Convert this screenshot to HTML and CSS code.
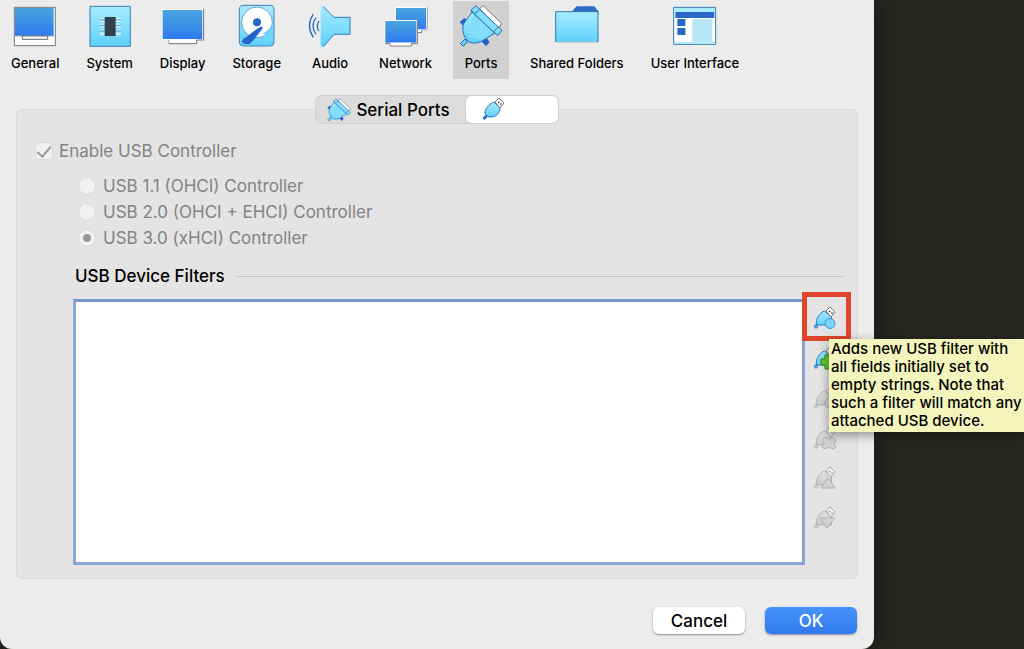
FILE: index.html
```html
<!DOCTYPE html>
<html lang="en">
<head>
<meta charset="utf-8">
<title>Settings - Ports</title>
<link rel="stylesheet" href="styles.css">
</head>
<body>
<svg class="defs" aria-hidden="true">
  <defs>
    <linearGradient id="screen" x1="0" y1="0" x2="0" y2="1"><stop offset="0" stop-color="#48a5dc"/><stop offset="1" stop-color="#2f7af0"/></linearGradient>
    <linearGradient id="aqua" x1="0" y1="0" x2="0" y2="1"><stop offset="0" stop-color="#a8ecfd"/><stop offset="1" stop-color="#5fd0fb"/></linearGradient>
    <linearGradient id="grey" x1="0" y1="0" x2="0" y2="1"><stop offset="0" stop-color="#e2e2e2"/><stop offset="1" stop-color="#cacaca"/></linearGradient>
    <symbol id="serial" viewBox="480 12 132 132">
      <path d="M542 26l10-9 55 52-4 12-10 4z" fill="#fff" stroke="#777" stroke-width="3"/>
      <path d="M482 66l14-12 14 12-14 15zM547 124l16-10 9 12-11 13z" fill="#2563cc"/>
      <path d="M484 131l14-14 7 8-12 14z" fill="#6bcdf8" stroke="#2469b4" stroke-width="3"/>
      <path d="M521 34l-28 38c-5 22 2 42 17 54 12 6 27 3 40-3l42-27z" fill="url(#aqua)" stroke="#2469b4" stroke-width="3"/>
      <path d="M516 31l14-14 79 74-12 15-14-10z" fill="#83def9" stroke="#2469b4" stroke-width="3"/>
      <path d="M524 38l60 57-34 25-40-10z" fill="#83def9"/>
      <path d="M515 32l69 65M527 41l15-13M583 96l15-15" stroke="#2469b4" stroke-width="3"/>
    </symbol>
    <symbol id="plug-head" viewBox="0 0 24 24">
      <path d="M13 4l4-4 5 5-4 5z" fill="#fff" stroke="#777"/>
      <path d="M16 4l1 1M18.500 5.500l1 1" stroke="#333" stroke-width="1.500"/>
    </symbol>
    <symbol id="plug" viewBox="0 0 24 24">
      <path d="M1.500 21l4-4" stroke="#2776bd" stroke-width="3"/>
      <path d="M12 4l6 6c0 5-4 9-9 9-3 0-5-1-6-4 0-4 4-9 9-11z" fill="url(#aqua)" stroke="#2776bd"/>
      <use href="#plug-head"/>
    </symbol>
    <symbol id="filter" viewBox="0 0 24 24">
      <path d="M3.500 18c-1-6 3-12 8-14l7 6v8z" fill="url(#aqua)" stroke="#2776bd"/>
      <circle cx="3" cy="19.500" r="1.600" fill="#69bff0" stroke="#2776bd"/>
      <use href="#plug-head"/>
    </symbol>
    <symbol id="filter-off" viewBox="0 0 24 24">
      <path d="M3.500 18c-1-6 3-12 8-14l7 6v8z" fill="url(#grey)" stroke="#b0b0b0"/>
      <circle cx="3" cy="19.500" r="1.600" fill="#ddd" stroke="#b0b0b0"/>
      <path d="M13 4l4-4 5 5-4 5z" fill="#f2f2f2" stroke="#aaa"/>
      <path d="M16 4l1 1M18.500 5.500l1 1" stroke="#999" stroke-width="1.500"/>
    </symbol>
  </defs>
</svg>

<main class="dialog">
  <nav class="toolbar" aria-label="Settings categories">
    <button class="category" type="button">
      <svg class="category-icon" viewBox="42 12 132 132"><path d="M46 22h123v115H46z" fill="#fff" stroke="#777" stroke-width="3"/><path d="M48 24h116v83H48z" fill="url(#screen)"/><path d="M48 108h118" stroke="#777" stroke-width="2"/><path d="M70 108h76v10H70z" fill="#fff" stroke="#666" stroke-width="3"/></svg>
      General
    </button>
    <button class="category" type="button">
      <svg class="category-icon" viewBox="271 12 132 132"><path d="M277 19h121v120H277z" fill="url(#aqua)" stroke="#3b7db8" stroke-width="3"/><path d="M306 56h64M306 64h64M306 73h64M306 81h64M306 90h64M306 99h64M306 104h64" stroke="#e8faff" stroke-width="3"/><path d="M306 59h64M306 76h64M306 93h64" stroke="#4b91bd" stroke-width="2"/><path d="M321 51h33v57h-33z" fill="#343f4d"/></svg>
      System
    </button>
    <button class="category" type="button">
      <svg class="category-icon" viewBox="499 12 132 132"><path d="M502 27h124v93H502z" fill="#fff"/><path d="M504 30h119v87H504z" fill="url(#screen)"/><path d="M627 27v93H606v11h-83v-10" fill="none" stroke="#777" stroke-width="3"/><path d="M524 119h80v10h-80z" fill="#fff"/></svg>
      Display
    </button>
    <button class="category" type="button">
      <svg class="category-icon" viewBox="729 12 132 132"><rect x="742" y="16" width="104" height="122" rx="12" fill="url(#aqua)" stroke="#3f83ba" stroke-width="3"/><circle cx="795" cy="67" r="46" fill="#fff" stroke="#397eb8" stroke-width="2"/><circle cx="795" cy="67" r="12" fill="#2465cb"/><path d="M811 79c-15 5-33 21-51 34-12 2-13 18-3 19h16c17-16 28-34 38-45z" fill="#2465cb"/><path d="M811 101c13-6 22-14 28-26v29z" fill="#72cef4"/></svg>
      Storage
    </button>
    <button class="category" type="button">
      <svg class="category-icon" viewBox="41 12 132 132"><path d="M79 16l8 4 32 32h49v51h-49l-32 37h-8z" fill="url(#aqua)"/><path d="M87 20l32 32h48v51h-48l-32 37" fill="none" stroke="#327ab9" stroke-width="3"/><path d="M74 63q-10 16 0 30M65 53q-18 25 0 50M57 42q-23 35 0 70" fill="none" stroke="#2870bf" stroke-width="4"/></svg>
      Audio
    </button>
    <button class="category" type="button">
      <svg class="category-icon" viewBox="262 12 132 132"><path d="M391 22v68h-16v8h-15" fill="#fff" stroke="#777" stroke-width="3"/><path d="M296 21h94v70h-94z" fill="#fff"/><path d="M298 24h90v64h-90z" fill="url(#screen)"/><path d="M264 60h98v70h-98z" fill="#fff"/><path d="M266 63h93v65h-93z" fill="url(#screen)"/><path d="M362 61v70h-17v7h-64v-7h-15" fill="none" stroke="#777" stroke-width="3"/><path d="M282 128h61v8h-61z" fill="#fff"/></svg>
      Network
    </button>
    <button class="category category-active" type="button" aria-current="page">
      <svg class="category-icon"><use href="#serial"/></svg>
      Ports
    </button>
    <button class="category" type="button">
      <svg class="category-icon" viewBox="128 12 132 132"><path d="M180 34l12-15h54l12 15v10h-78z" fill="#2c6dcc"/><path d="M130 35h127v90H130z" fill="url(#aqua)"/><path d="M130 126V35h127v91" fill="none" stroke="#3378b1" stroke-width="3"/><path d="M132 126h124" stroke="#8ab6cc" stroke-width="3"/></svg>
      Shared Folders
    </button>
    <button class="category" type="button">
      <svg class="category-icon" viewBox="497 12 132 132"><path d="M499 22h126v111H499z" fill="#fff" stroke="#3577b0" stroke-width="3"/><path d="M501 24h122v12H501z" fill="#a7edfc"/><path d="M504 36h117v18H504zM510 57h24v21h-24zM510 84h24v21h-24z" fill="#2868c9"/><path d="M555 57h60v69h-60z" fill="#b8e8f5"/><path d="M502 129h120" stroke="#9fe7fb" stroke-width="4"/></svg>
      User Interface
    </button>
  </nav>

  <div class="tabs" role="tablist">
    <button class="tab" type="button" role="tab" aria-selected="false"><svg class="icon"><use href="#serial"/></svg>Serial Ports</button>
    <button class="tab tab-active" type="button" role="tab" aria-selected="true" aria-label="USB"><svg class="icon"><use href="#plug"/></svg></button>
  </div>

  <section class="panel">
    <label class="option"><input class="check" type="checkbox" checked disabled>Enable USB Controller</label>
    <div class="versions">
      <label class="option"><input class="radio" type="radio" name="usb" disabled>USB 1.1 (OHCI) Controller</label>
      <label class="option"><input class="radio" type="radio" name="usb" disabled>USB 2.0 (OHCI + EHCI) Controller</label>
      <label class="option"><input class="radio" type="radio" name="usb" checked disabled>USB 3.0 (xHCI) Controller</label>
    </div>
    <h2 class="heading" id="filters">USB Device Filters</h2>
    <div class="filters">
      <ul class="filter-list" role="listbox" tabindex="0" aria-labelledby="filters"></ul>
      <div class="actions">
        <div class="action-wrap">
          <button class="action" type="button" aria-label="Add empty filter" aria-describedby="tip"><svg class="icon" viewBox="0 0 24 24"><use href="#filter"/><circle cx="17" cy="16.500" r="5" fill="#77d6fb" stroke="#3e96d2"/></svg></button>
          <span class="highlight"></span>
          <div class="tooltip" id="tip" role="tooltip">Adds new USB filter with all fields initially set to empty strings. Note that such a filter will match any attached USB device.</div>
        </div>
        <button class="action" type="button" aria-label="Add filter from device"><svg class="icon" viewBox="0 0 24 24"><use href="#filter"/><path d="M12 8h6v4h4v6h-4v4h-6v-4H8v-6h4z" fill="#63c830" stroke="#28851d"/></svg></button>
        <button class="action" type="button" aria-label="Edit filter" disabled><svg class="icon" viewBox="0 0 24 24"><use href="#filter-off"/><circle cx="17" cy="16" r="5" fill="#d5d5d5" stroke="#b0b0b0"/></svg></button>
        <button class="action" type="button" aria-label="Remove filter" disabled><svg class="icon" viewBox="0 0 24 24"><use href="#filter-off"/><path d="M12 10l4 2 4-2 3 3-2 4 2 3-3 2-4-2-4 2-3-2 2-4-2-3z" fill="#d2d2d2" stroke="#b0b0b0"/></svg></button>
        <button class="action" type="button" aria-label="Move filter up" disabled><svg class="icon" viewBox="0 0 24 24"><use href="#filter-off"/><path d="M15 11l7 10H8z" fill="#d2d2d2" stroke="#b0b0b0"/></svg></button>
        <button class="action" type="button" aria-label="Move filter down" disabled><svg class="icon" viewBox="0 0 24 24"><use href="#filter-off"/><path d="M7 11h15l-8 10z" fill="#d2d2d2" stroke="#b0b0b0"/></svg></button>
      </div>
    </div>
  </section>

  <footer class="footer">
    <button class="button" type="button">Cancel</button>
    <button class="button button-primary" type="button">OK</button>
  </footer>
</main>
</body>
</html>
```

FILE: styles.css
```css
* { box-sizing: border-box; }

body {
  margin: 0;
  padding-right: 150px;
  background: #272721;
  color: #000;
  font: 17px/20px Inter, "Liberation Sans", sans-serif;
}

button {
  margin: 0;
  padding: 0;
  border: 0;
  background: none;
  color: inherit;
  font: inherit;
}

.defs { position: absolute; width: 0; height: 0; }

.dialog {
  display: flex;
  flex-direction: column;
  min-height: 100vh;
  padding-top: 1px;
  border-radius: 0 0 12px 12px;
  background: #ececec;
  box-shadow: 0 0 24px rgba(0, 0, 0, 0.5);
}

.toolbar {
  display: flex;
  gap: 15px;
  padding-left: 5px;
}

.category {
  display: flex;
  flex-direction: column;
  align-items: center;
  gap: 5px;
  padding: 3px 6px 6px;
  font-size: 13px;
  font-weight: 500;
  white-space: nowrap;
}

.category-active { background: #d1d1d1; }
.category-icon { width: 44px; height: 44px; }
.icon { display: block; width: 24px; height: 24px; }

.tabs {
  z-index: 1;
  display: flex;
  align-self: center;
  margin-top: 16px;
  border-radius: 7px;
  background: #dcdcdc;
  box-shadow: inset 0 0 0 1px #d0d0d0;
}

.tab {
  display: flex;
  align-items: center;
  gap: 5px;
  height: 29px;
  padding: 0 15px 0 12px;
  font-weight: 500;
}

.tab-active {
  width: 94px;
  padding-left: 16px;
  border: 1px solid #cfcfcf;
  border-radius: 7px;
  background: #fff;
}

.panel {
  display: flex;
  flex: 1;
  flex-direction: column;
  margin: -15px 16px 0;
  padding: 29px 14px 13px 18px;
  border: 1px solid #dadada;
  border-radius: 6px;
  background: #e4e4e4;
}

.option {
  display: flex;
  align-items: center;
  gap: 6px;
  min-height: 24px;
  color: #838383;
}

.check,
.radio {
  display: grid;
  place-items: center;
  width: 18px;
  height: 18px;
  margin: 0;
  border: 1px solid #d9d9d9;
  border-radius: 4px;
  background: #f1f1f1;
  appearance: none;
}

.radio { border-radius: 50%; }

.check:checked::before {
  width: 6px;
  height: 12px;
  margin-bottom: 3px;
  border: solid #999;
  border-width: 0 2px 2px 0;
  content: "";
  transform: rotate(40deg);
}

.radio:checked::before {
  width: 8px;
  height: 8px;
  border-radius: 50%;
  background: #979797;
  content: "";
}

.versions {
  display: grid;
  gap: 2px;
  margin: 11px 0 0 43px;
}

.versions .option { gap: 7px; }

.heading {
  display: flex;
  align-items: center;
  gap: 12px;
  margin: 16px 0 13px 40px;
  font-size: 17px;
  font-weight: 500;
}

.heading::after {
  flex: 1;
  height: 1px;
  background: #c4c4c4;
  content: "";
}

.filters {
  display: flex;
  flex: 1;
  margin-left: 38px;
}

.filter-list {
  flex: 1;
  margin: 0;
  padding: 0;
  border: 3px solid #8ba4d9;
  border-top-color: #7995ce;
  background: #fff;
  list-style: none;
  outline: 0;
}

.actions { width: 38px; }

.action-wrap { position: relative; }

.action {
  display: grid;
  place-items: center;
  width: 40px;
  height: 40px;
}

.highlight {
  position: absolute;
  top: -7px;
  left: -3px;
  width: 49px;
  height: 49px;
  border: 5px solid #e0452b;
  pointer-events: none;
}

.tooltip {
  position: absolute;
  z-index: 2;
  top: 40px;
  left: 24px;
  width: 195px;
  padding: 1px 0 2px 2px;
  background: #f4f5bd;
  box-shadow: 0 3px 10px rgba(0, 0, 0, 0.4);
  font-size: 15px;
  font-weight: 500;
  line-height: 18px;
}

.footer {
  display: flex;
  justify-content: flex-end;
  gap: 20px;
  padding: 28px 17px 15px;
}

.button {
  width: 92px;
  height: 27px;
  border-radius: 6px;
  background: #fff;
  box-shadow: 0 1px 2px rgba(0, 0, 0, 0.4);
  font-weight: 500;
}

.button-primary {
  background: linear-gradient(#4793f8, #3079ef);
  color: #fff;
}
```
